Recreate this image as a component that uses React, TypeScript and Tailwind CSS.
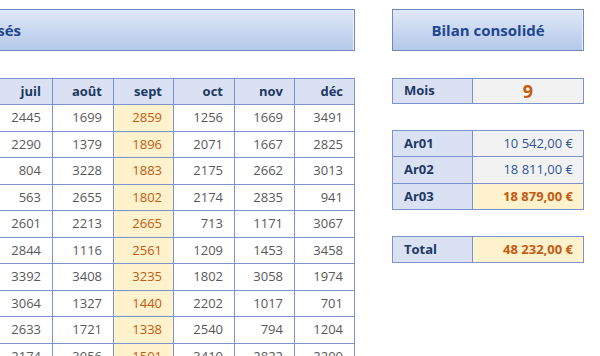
const months = ['juil', 'août', 'sept', 'oct', 'nov', 'déc'];

const colWidths = ['w-[60px]', 'w-[61px]', 'w-[60px]', 'w-[61px]', 'w-[60px]', 'w-[60px]'];

const rows = [
  [2445, 1699, 2859, 1256, 1669, 3491],
  [2290, 1379, 1896, 2071, 1667, 2825],
  [804, 3228, 1883, 2175, 2662, 3013],
  [563, 2655, 1802, 2174, 2835, 941],
  [2601, 2213, 2665, 713, 1171, 3067],
  [2844, 1116, 2561, 1209, 1453, 3458],
  [3392, 3408, 3235, 1802, 3058, 1974],
  [3064, 1327, 1440, 2202, 1017, 701],
  [2633, 1721, 1338, 2540, 794, 1204],
  [2174, 3056, 1501, 3419, 2822, 2200]
];

// alternate heights so row lines fall on the same pixels as the sheet
const rowHeight = (i: number) => (i % 2 === 0 ? 'h-[27px]' : 'h-[26px]');

const titleBox =
  'h-[42px] border border-[#6f88c2] bg-gradient-to-b from-[#dfe8f6] to-[#b5c8e9] shadow-[inset_-1px_0_0_#eef3fb] flex items-center';

function MonthTable() {
  return (
    <div className="border-t border-l border-[#7b93cf]">
      <div className="flex h-[26px] bg-[#d9e1f2]">
        {months.map((m, j) => (
          <div
            key={m}
            className={`${colWidths[j]} border-r border-b border-[#7b93cf] flex items-center justify-end pr-[11px] font-bold text-[#1f3864]`}
          >
            {m}
          </div>
        ))}
      </div>
      {rows.map((row, i) => (
        <div key={i} className={`flex ${rowHeight(i)}`}>
          {row.map((v, j) => {
            const isSept = j === 2;
            return (
              <div
                key={j}
                className={`${colWidths[j]} border-r border-b border-[#7b93cf] flex items-center justify-end pr-[11px] ${
                  isSept ? 'bg-[#fff2cc] text-[#c55a11]' : 'bg-white text-[#595959]'
                }`}
              >
                {v}
              </div>
            );
          })}
        </div>
      ))}
    </div>
  );
}

interface BilanRowProps {
  label: string;
  value: string;
  highlight?: boolean;
  tall?: boolean;
}

function BilanRow({ label, value, highlight, tall }: BilanRowProps) {
  return (
    <div className={`flex ${tall ? 'h-[27px]' : 'h-[26px]'}`}>
      <div className="w-[80px] border-r border-b border-[#7b93cf] bg-[#d9e1f2] flex items-center pl-[11px] font-bold text-[#1f3864]">
        {label}
      </div>
      <div
        className={`w-[111px] border-r border-b border-[#7b93cf] flex items-center justify-end pr-[10px] ${
          highlight ? 'bg-[#fff2cc] text-[#c55a11] font-bold' : 'bg-[#f2f2f2] text-[#2f5597]'
        }`}
      >
        {value}
      </div>
    </div>
  );
}

export default function App() {
  return (
    <div
      className="w-[600px] h-[356px] overflow-hidden bg-white flex text-[13px]"
      style={{ fontFamily: '"Open Sans", "Noto Sans", sans-serif' }}
    >
      <div className="w-[363px] shrink-0 -ml-[8px] pt-[9px]">
        <div className={titleBox}>
          <div className="w-[28px] overflow-hidden flex justify-end">
            <span className="whitespace-nowrap font-bold text-[15px] text-[#1f4690]">
              Montants encaissés
            </span>
          </div>
        </div>
        <div className="mt-[27px]">
          <MonthTable />
        </div>
      </div>

      <div className="w-[192px] shrink-0 ml-[37px] pt-[9px]">
        <div className={`${titleBox} justify-center`}>
          <span className="font-bold text-[15px] text-[#1f4690]">Bilan consolidé</span>
        </div>

        <div className="mt-[27px] border-t border-l border-[#7b93cf] flex h-[26px]">
          <div className="w-[80px] border-r border-b border-[#7b93cf] bg-[#d9e1f2] flex items-center pl-[11px] font-bold text-[#1f3864]">
            Mois
          </div>
          <div className="w-[111px] border-r border-b border-[#7b93cf] bg-[#f2f2f2] flex items-center justify-center font-bold text-[18px] text-[#c55a11]">
            9
          </div>
        </div>

        <div className="mt-[26px] border-t border-l border-[#7b93cf]">
          <BilanRow label="Ar01" value="10 542,00 €" />
          <BilanRow label="Ar02" value="18 811,00 €" tall />
          <BilanRow label="Ar03" value="18 879,00 €" highlight />
        </div>

        <div className="mt-[26px] border-t border-l border-[#7b93cf]">
          <BilanRow label="Total" value="48 232,00 €" highlight />
        </div>
      </div>
    </div>
  );
}
